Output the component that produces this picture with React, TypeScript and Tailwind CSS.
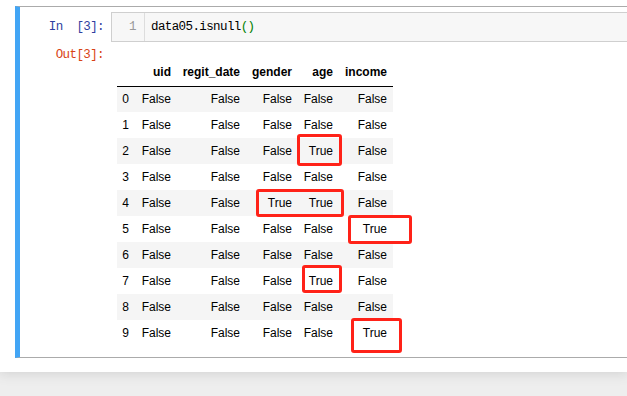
import React from 'react'

const cols = [
  { name: 'uid', w: 'w-[42px]' },
  { name: 'regit_date', w: 'w-[69px]' },
  { name: 'gender', w: 'w-[52px]' },
  { name: 'age', w: 'w-[41px]' },
  { name: 'income', w: 'w-[54px]' },
]

// which cells are True (row -> column indexes)
const trues: Record<number, number[]> = {
  2: [3],
  4: [2, 3],
  5: [4],
  7: [3],
  9: [4],
}

// red annotation boxes drawn over the output
const marks = [
  { l: 'left-[297px] top-[134px] w-[45px] h-[32px]' },
  { l: 'left-[256px] top-[189px] w-[88px] h-[28px]' },
  { l: 'left-[348px] top-[215px] w-[64px] h-[29px]' },
  { l: 'left-[302px] top-[265px] w-[40px] h-[28px]' },
  { l: 'left-[351px] top-[318px] w-[51px] h-[35px]' },
]

const mono = "font-['Liberation_Mono',monospace] text-[12.5px] tracking-[-0.6px]"

export default function App() {
  const rows = Array.from({ length: 10 }, (_, i) => i)

  return (
    <div className="relative w-[627px] h-[396px] overflow-hidden bg-[#eeeeee]">
      <div className="h-[372px] bg-white pt-[6px] pl-[15px] shadow-[0_0_12px_1px_rgba(87,87,87,0.2)]">
        <div className="h-[352px] border-y border-[#ababab] border-l-[5px] border-l-[#42a5f5]">
          {/* input */}
          <div className="flex mt-[5px]">
            <div className={`w-[91px] pr-[7px] text-right ${mono} leading-[30px] text-[#303f9f] whitespace-pre`}>
              {'In  [3]:'}
            </div>
            <div className="flex-1 h-[30px] flex border-y border-l border-[#cfcfcf] bg-[#f7f7f7]">
              <div className={`w-[33px] pr-[8px] text-right border-r border-[#dddddd] ${mono} leading-[28px] text-[#999999]`}>
                1
              </div>
              <div className={`pl-[6px] ${mono} leading-[28px] text-black`}>
                data05.isnull<span className="text-[#008000]">()</span>
              </div>
            </div>
          </div>

          {/* output */}
          <div className="flex mt-[5px]">
            <div className={`w-[91px] pr-[7px] text-right ${mono} leading-[16px] text-[#d84315]`}>
              Out[3]:
            </div>
            <table className="ml-[6px] mt-[12px] border-collapse font-['Liberation_Sans',Arial,sans-serif] text-[12px] text-black">
              <thead>
                <tr className="border-b border-black">
                  <th className="w-[18px] h-[27px] p-0"></th>
                  {cols.map((c) => (
                    <th key={c.name} className={`${c.w} h-[27px] p-0 pr-[6px] text-right font-bold`}>
                      {c.name}
                    </th>
                  ))}
                </tr>
              </thead>
              <tbody>
                {rows.map((r) => (
                  <tr key={r} className={r % 2 === 0 ? 'bg-[#f5f5f5]' : 'bg-white'}>
                    <td className="h-[26px] p-0 pr-[6px] text-right">{r}</td>
                    {cols.map((c, ci) => (
                      <td key={c.name} className="h-[26px] p-0 pr-[6px] text-right">
                        {trues[r]?.includes(ci) ? 'True' : 'False'}
                      </td>
                    ))}
                  </tr>
                ))}
              </tbody>
            </table>
          </div>
        </div>
      </div>

      {marks.map((m, i) => (
        <div key={i} className={`absolute ${m.l} border-[3px] border-[#ff2218] rounded-[3px]`} />
      ))}
    </div>
  )
}
